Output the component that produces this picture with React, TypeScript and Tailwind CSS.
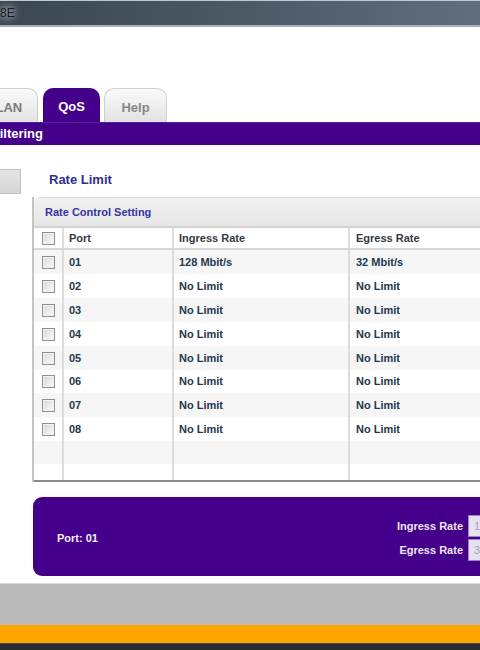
const rows = [
  { port: "01", ingress: "128 Mbit/s", egress: "32 Mbit/s", h: "h-[24px]" },
  { port: "02", ingress: "No Limit", egress: "No Limit", h: "h-[24px]" },
  { port: "03", ingress: "No Limit", egress: "No Limit", h: "h-[24px]" },
  { port: "04", ingress: "No Limit", egress: "No Limit", h: "h-[24px]" },
  { port: "05", ingress: "No Limit", egress: "No Limit", h: "h-[24px]" },
  { port: "06", ingress: "No Limit", egress: "No Limit", h: "h-[23px]" },
  { port: "07", ingress: "No Limit", egress: "No Limit", h: "h-[24px]" },
  { port: "08", ingress: "No Limit", egress: "No Limit", h: "h-[24px]" },
];

function Checkbox() {
  return (
    <div className="h-[13px] w-[13px] border border-[#8e8f8f] bg-gradient-to-br from-[#d8d8d8] to-[#fbfbfb] shadow-[inset_0_0_0_1px_#f2f2f2]" />
  );
}

function Cells({ a, b, c }: { a?: string; b?: string; c?: string }) {
  const text = "text-[11px] font-bold text-[#24384e]";
  return (
    <>
      <div className="flex w-[30px] shrink-0 items-center border-r-2 border-[#dcdcdc] pl-[8px]">
        {a !== undefined && <Checkbox />}
      </div>
      <div className={`flex w-[110px] shrink-0 items-center border-r-2 border-[#dcdcdc] pl-[5px] ${text}`}>{a}</div>
      <div className={`flex w-[176px] shrink-0 items-center border-r-2 border-[#dcdcdc] pl-[5px] ${text}`}>{b}</div>
      <div className={`flex flex-1 items-center pl-[6px] ${text}`}>{c}</div>
    </>
  );
}

export default function App() {
  return (
    <div className="relative h-[650px] w-[480px] overflow-hidden bg-white font-['Liberation_Sans',Arial,sans-serif]">
      {/* window title bar */}
      <div className="h-[27px] border-t border-[#c4c8cc] border-b-2 border-b-[#a9b0b6] bg-gradient-to-r from-[#3a4651] via-[#4b5967] to-[#5f6f7e]">
        <div className="flex h-full items-center">
          <span className="text-[12px] leading-none text-[#151b20] [text-shadow:0_0_6px_#c8d0d6,0_0_10px_#c8d0d6]">8E</span>
        </div>
      </div>

      <div className="h-[61px]" />

      {/* tabs */}
      <div className="flex h-[34px] items-end">
        <div className="ml-[-29px] flex h-[34px] w-[67px] items-center justify-center rounded-t-[10px] border border-b-0 border-[#cfcfcf] bg-gradient-to-b from-[#fbfbfb] to-[#e2e2e2] pt-[4px] text-[13px] font-bold text-[#7a7a7a]">
          VLAN
        </div>
        <div className="ml-[5px] flex h-[34px] w-[57px] items-center justify-center rounded-t-[10px] bg-[#44008a] pt-[4px] text-[13px] font-bold text-white">
          QoS
        </div>
        <div className="ml-[4px] flex h-[34px] w-[63px] items-center justify-center rounded-t-[10px] border border-b-0 border-[#cfcfcf] bg-gradient-to-b from-[#fbfbfb] to-[#e2e2e2] pt-[4px] text-[13px] font-bold text-[#868686]">
          Help
        </div>
      </div>

      {/* sub menu bar */}
      <div className="flex h-[23px] items-center border-t border-[#5a1ea0] bg-[#44008a]">
        <div className="flex w-[43px] justify-end whitespace-nowrap text-[13px] font-bold text-white">
          Broadcast Filtering
        </div>
      </div>

      {/* content */}
      <div className="flex h-[438px] pt-[24px]">
        <div className="w-[32px] shrink-0">
          <div className="h-[25px] w-[21px] border border-l-0 border-[#c2c2c2] bg-gradient-to-b from-[#e4e4e4] to-[#d6d6d6]" />
        </div>
        <div className="flex flex-col">
          <div className="h-[20px] pl-[17px] text-[13px] font-bold leading-[22px] text-[#2d2d96]">Rate Limit</div>

          <div className="mt-[8px] w-[560px] border-l-2 border-[#c4c4c4]">
            <div className="flex h-[31px] items-center rounded-tl-[6px] border-t border-[#dedede] border-b-2 border-b-[#d2d2d2] bg-gradient-to-b from-[#f1f1f1] to-[#e6e6e6] pl-[11px] text-[11px] font-bold text-[#3434a4]">
              Rate Control Setting
            </div>
            <div className="flex h-[22px] border-b-2 border-[#d6d6d6] bg-white">
              <div className="flex w-[30px] shrink-0 items-center border-r-2 border-[#dcdcdc] pl-[8px]">
                <Checkbox />
              </div>
              <div className="flex w-[110px] shrink-0 items-center border-r-2 border-[#dcdcdc] pl-[5px] text-[11px] font-bold text-[#333a42]">Port</div>
              <div className="flex w-[176px] shrink-0 items-center border-r-2 border-[#dcdcdc] pl-[5px] text-[11px] font-bold text-[#333a42]">Ingress Rate</div>
              <div className="flex flex-1 items-center pl-[6px] text-[11px] font-bold text-[#333a42]">Egress Rate</div>
            </div>
            {rows.map((r, i) => (
              <div key={r.port} className={`flex ${r.h} ${i % 2 === 0 ? "bg-[#f6f6f6]" : "bg-white"}`}>
                <Cells a={r.port} b={r.ingress} c={r.egress} />
              </div>
            ))}
            <div className="flex h-[23px] bg-[#f6f6f6]">
              <Cells />
            </div>
            <div className="flex h-[18px] border-b-2 border-[#8a8a8a] bg-white">
              <Cells />
            </div>
          </div>

          {/* selected port editor */}
          <div className="ml-[1px] mt-[15px] flex h-[79px] w-[560px] items-center rounded-[9px] bg-[#44008a] pt-[3px]">
            <div className="w-[300px] pl-[24px] text-[11px] font-bold text-[#f2effa]">Port: 01</div>
            <div className="flex flex-col gap-[2px]">
              <div className="flex items-center">
                <div className="w-[130px] text-right text-[11px] font-bold text-[#ece8f6]">Ingress Rate</div>
                <div className="ml-[5px] flex h-[22px] w-[70px] items-center border border-[#9a86c4] bg-[#e6e0f0] pl-[5px] text-[11px] text-[#a8a0b8]">128</div>
              </div>
              <div className="flex items-center">
                <div className="w-[130px] text-right text-[11px] font-bold text-[#ece8f6]">Egress Rate</div>
                <div className="ml-[5px] flex h-[22px] w-[70px] items-center border border-[#9a86c4] bg-[#e6e0f0] pl-[5px] text-[11px] text-[#a8a0b8]">32</div>
              </div>
            </div>
          </div>
        </div>
      </div>

      {/* footer */}
      <div className="h-[42px] border-t border-[#d6d6d6] bg-[#b9b9b9]" />
      <div className="h-[18px] bg-[#ffa500]" />
      <div className="h-[7px] border-t border-[#4a4f55] bg-[#272d33]" />
    </div>
  );
}
